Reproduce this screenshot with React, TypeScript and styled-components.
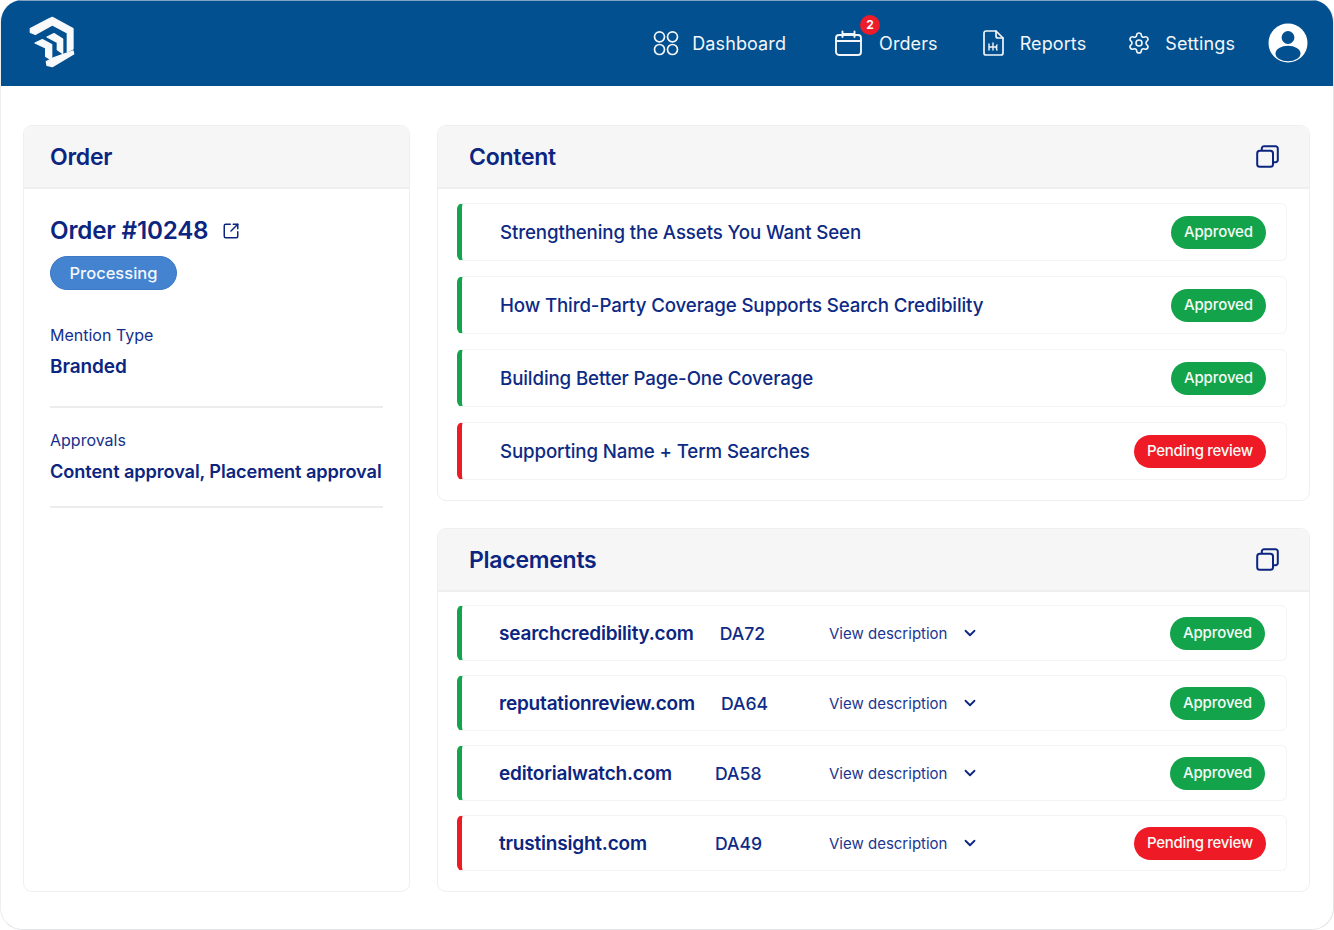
import React from "react";
import styled, { createGlobalStyle } from "styled-components";
import { ChevronDown, Settings as Gear, SquareArrowOutUpRight } from "lucide-react";

const Global = createGlobalStyle`
  html, body { margin: 0; padding: 0; background: #fff; }
  body { font-family: "Inter", "Noto Sans", sans-serif; color: #0b2580; -webkit-font-smoothing: antialiased; }
  * { box-sizing: border-box; }
`;

const Frame = styled.div`
  width: 1334px; height: 930px; background: #fff; overflow: hidden;
  border-radius: 22px; border: 1px solid #e2e3e5; border-top: 0; border-left-color: #eee;
  display: flex; flex-direction: column;
`;
const Header = styled.header`
  height: 86px; flex: none; background: #02508f; border-top: 1px solid #7fa4c6;
  display: flex; align-items: center; padding: 0 25px 2px 23px;
`;
const Logo = styled.svg`width: 56px; height: 60px; flex: none;`;
const Nav = styled.nav`margin-left: auto; display: flex; align-items: center;`;
const NavItem = styled.a<{ $gap: number; $left: number }>`
  display: flex; align-items: center; gap: ${p => p.$gap}px; margin-left: ${p => p.$left}px;
  color: #f2f6fa; font-size: 18px; font-weight: 400; letter-spacing: 0.1px; position: relative; white-space: nowrap;
`;
const NavLabel = styled.span`margin-top: 1px;`;
const Badge = styled.span`
  position: absolute; left: 25px; top: -15px; width: 20px; height: 20px; border-radius: 50%;
  background: #ee1c2a; color: #fff; font-size: 12px; font-weight: 700; display: flex; align-items: center; justify-content: center;
`;
const Avatar = styled.svg`width: 40px; height: 40px; margin-left: 33px; flex: none;`;

const Main = styled.main`
  flex: 1; display: grid; grid-template-columns: 387px 873px; gap: 27px;
  padding: 39px 0 37px 22px; min-height: 0;
`;
const Column = styled.div`display: flex; flex-direction: column; gap: 27px; min-height: 0;`;
const Card = styled.section<{ $grow?: boolean }>`
  background: #fff; border: 1px solid #eeeff1; border-radius: 9px; overflow: hidden;
  display: flex; flex-direction: column; ${p => (p.$grow ? "flex: 1;" : "")}
`;
const CardHead = styled.div<{ $pad: number }>`
  height: 63px; flex: none; background: #f6f6f7; border-bottom: 2px solid #efefef;
  display: flex; align-items: center; justify-content: space-between; padding: 0 30px 0 ${p => p.$pad}px;
`;
const Title = styled.h2`margin: 0; font-size: 23px; font-weight: 600; letter-spacing: -0.25px; color: #0b2580;`;
const OrderBody = styled.div`padding: 26px 26px 0 26px;`;
const OrderTitle = styled.div`
  display: flex; align-items: center; gap: 14px; font-size: 24.2px; font-weight: 600; letter-spacing: -0.2px; line-height: 32px;
`;
const StatusPill = styled.span`
  display: inline-flex; align-items: center; justify-content: center; margin-top: 9px;
  width: 127px; height: 34px; border-radius: 18px; background: #4483d0; border: 1px solid #3d79c4;
  color: #f4f8fd; font-size: 16.5px; font-weight: 500;
`;
const Field = styled.div<{ $top: number; $bottom: number }>`
  margin-top: ${p => p.$top}px; padding-bottom: ${p => p.$bottom}px; border-bottom: 2px solid #ececee;
`;
const FieldLabel = styled.div`font-size: 16px; font-weight: 400; line-height: 20px; color: #15308c;`;
const FieldValue = styled.div<{ $size: number; $top: number }>`
  margin-top: ${p => p.$top}px; font-size: ${p => p.$size}px; font-weight: 600; line-height: 22px; white-space: nowrap; letter-spacing: -0.1px;
`;
const List = styled.div<{ $gap: number; $top: number }>`
  display: flex; flex-direction: column; gap: ${p => p.$gap}px; padding: ${p => p.$top}px 22px 20px 19px;
`;
const Row = styled.div<{ $ok: boolean; $h: number; $pad: number }>`
  height: ${p => p.$h}px; display: flex; align-items: center; justify-content: space-between;
  background: #fff; border: 1px solid #f4f4f5; border-left: 5px solid ${p => (p.$ok ? "#14a44d" : "#ec1c24")};
  border-radius: 6px; padding: 0 20px 0 ${p => p.$pad}px;
`;
const RowTitle = styled.div`font-size: 18.7px; font-weight: 500; letter-spacing: -0.12px; color: #0d2a84; white-space: nowrap;`;
const Pill = styled.span<{ $ok: boolean; $nudge?: boolean }>`
  height: 33px; padding: 0 13px 1px; border-radius: 17px; display: inline-flex; align-items: center;
  background: ${p => (p.$ok ? "#13a44b" : "#ee1a25")}; color: #f5fbf7; font-size: 15px; font-weight: 500; white-space: nowrap;
  letter-spacing: ${p => (p.$ok ? "-0.1px" : "-0.3px")};
  margin-right: ${p => (p.$nudge && p.$ok ? "1px" : "0")};
`;
const PlaceInfo = styled.div`display: flex; align-items: center; width: 330px; flex: none;`;
const Domain = styled.div`min-width: 190px; font-size: 19px; font-weight: 600; letter-spacing: -0.2px; color: #0b2580; white-space: nowrap;`;
const Da = styled.div`margin-left: 26px; font-size: 17.6px; font-weight: 500; color: #0f2b86;`;
const Describe = styled.div`display: flex; align-items: center; gap: 14px; font-size: 15px; color: #1a3690; margin-right: auto; white-space: nowrap;
  svg { color: #0b2580; }
`;

const Dashboard = () => (
  <svg width="26" height="26" viewBox="0 0 26 26" fill="none" stroke="#f2f6fa" strokeWidth="1.7">
    <circle cx="6.5" cy="6.8" r="5" /><circle cx="19.5" cy="6.8" r="5" />
    <circle cx="6.5" cy="19.5" r="5" /><circle cx="19.5" cy="19.5" r="5" />
  </svg>
);
const Calendar = () => (
  <svg width="27" height="26" viewBox="0 0 27 26" fill="none" stroke="#f2f6fa" strokeWidth="1.9" strokeLinecap="round">
    <rect x="1" y="5" width="25" height="20" rx="3" />
    <path d="M1.5 11h24M7.5 1.5v5.5M19.5 1.5v5.5M7.5 4h12" />
  </svg>
);
const Report = () => (
  <svg width="21" height="26" viewBox="0 0 21 26" fill="none" stroke="#f2f6fa" strokeWidth="1.7" strokeLinejoin="round" strokeLinecap="round">
    <path d="M3 1h10l7 7v15a2 2 0 0 1-2 2H3a2 2 0 0 1-2-2V3a2 2 0 0 1 2-2Z" />
    <path d="M13 1v5a2 2 0 0 0 2 2h5" />
    <path d="M6 14v6M10 13v7M6 17h8M14 15l-1 2 1 3" strokeWidth="1.4" />
  </svg>
);
const CopyIcon = () => (
  <svg width="23" height="23" viewBox="0 0 23 23" fill="none" stroke="#0b2580" strokeWidth="2">
    <rect x="1.2" y="5.8" width="15.8" height="16" rx="2.6" />
    <path d="M5.8 5.6V3.4A2.2 2.2 0 0 1 8 1.2h11.6a2.2 2.2 0 0 1 2.2 2.2v11.6a2.2 2.2 0 0 1-2.2 2.2h-2.4" />
  </svg>
);

const content = [
  ["Strengthening the Assets You Want Seen", true],
  ["How Third-Party Coverage Supports Search Credibility", true],
  ["Building Better Page-One Coverage", true],
  ["Supporting Name + Term Searches", false],
] as const;
const placements = [
  ["searchcredibility.com", "DA72", true],
  ["reputationreview.com", "DA64", true],
  ["editorialwatch.com", "DA58", true],
  ["trustinsight.com", "DA49", false],
] as const;

export default function App() {
  return (
    <>
      <Global />
      <Frame>
        <Header>
          <Logo viewBox="0 0 168 180" fill="#f7f9fb" stroke="#f7f9fb" strokeWidth="4" strokeLinejoin="round">
            <path d="M19 47 72 19 85 13 100 21 147 47 147 108 130 116V60L85 36 34 64 19 58Z" />
            <path d="M147 114 149 123 85 161 69 157 67 146 90 134Z" />
            <path d="M69 72 90 62 116 78V121L100 110V88Z" />
            <path d="M33 90 55 80 83 95V141L65 130V105Z" />
          </Logo>
          <Nav>
            <NavItem $gap={13} $left={0}><Dashboard /><NavLabel>Dashboard</NavLabel></NavItem>
            <NavItem $gap={17} $left={49}><Calendar /><Badge>2</Badge><NavLabel>Orders</NavLabel></NavItem>
            <NavItem $gap={16} $left={45}><Report /><NavLabel>Reports</NavLabel></NavItem>
            <NavItem $gap={14} $left={41}><Gear size={24} strokeWidth={1.6} /><NavLabel>Settings</NavLabel></NavItem>
            <Avatar viewBox="0 0 40 40">
              <defs><clipPath id="av"><circle cx="20" cy="20" r="19.5" /></clipPath></defs>
              <circle cx="20" cy="20" r="19.5" fill="#fff" />
              <g clipPath="url(#av)" fill="#02508f">
                <circle cx="20" cy="14.5" r="6.4" />
                <ellipse cx="20" cy="30.5" rx="12.5" ry="7.8" />
              </g>
            </Avatar>
          </Nav>
        </Header>
        <Main>
          <Card $grow>
            <CardHead $pad={26}><Title>Order</Title></CardHead>
            <OrderBody>
              <OrderTitle>Order #10248<SquareArrowOutUpRight size={18} strokeWidth={2} /></OrderTitle>
              <StatusPill>Processing</StatusPill>
              <Field $top={35} $bottom={28}>
                <FieldLabel>Mention Type</FieldLabel>
                <FieldValue $size={19} $top={11}>Branded</FieldValue>
              </Field>
              <Field $top={22} $bottom={24}>
                <FieldLabel>Approvals</FieldLabel>
                <FieldValue $size={18.2} $top={10}>Content approval, Placement approval</FieldValue>
              </Field>
            </OrderBody>
          </Card>
          <Column>
            <Card>
              <CardHead $pad={31}><Title>Content</Title><CopyIcon /></CardHead>
              <List $gap={15} $top={14}>
                {content.map(([t, ok]) => (
                  <Row key={t} $ok={ok} $h={58} $pad={38}>
                    <RowTitle>{t}</RowTitle>
                    <Pill $ok={ok}>{ok ? "Approved" : "Pending review"}</Pill>
                  </Row>
                ))}
              </List>
            </Card>
            <Card $grow>
              <CardHead $pad={31}><Title>Placements</Title><CopyIcon /></CardHead>
              <List $gap={14} $top={13}>
                {placements.map(([d, da, ok]) => (
                  <Row key={d} $ok={ok} $h={56} $pad={37}>
                    <PlaceInfo><Domain>{d}</Domain><Da>{da}</Da></PlaceInfo>
                    <Describe>View description<ChevronDown size={18} strokeWidth={2.4} /></Describe>
                    <Pill $ok={ok} $nudge>{ok ? "Approved" : "Pending review"}</Pill>
                  </Row>
                ))}
              </List>
            </Card>
          </Column>
        </Main>
      </Frame>
    </>
  );
}
